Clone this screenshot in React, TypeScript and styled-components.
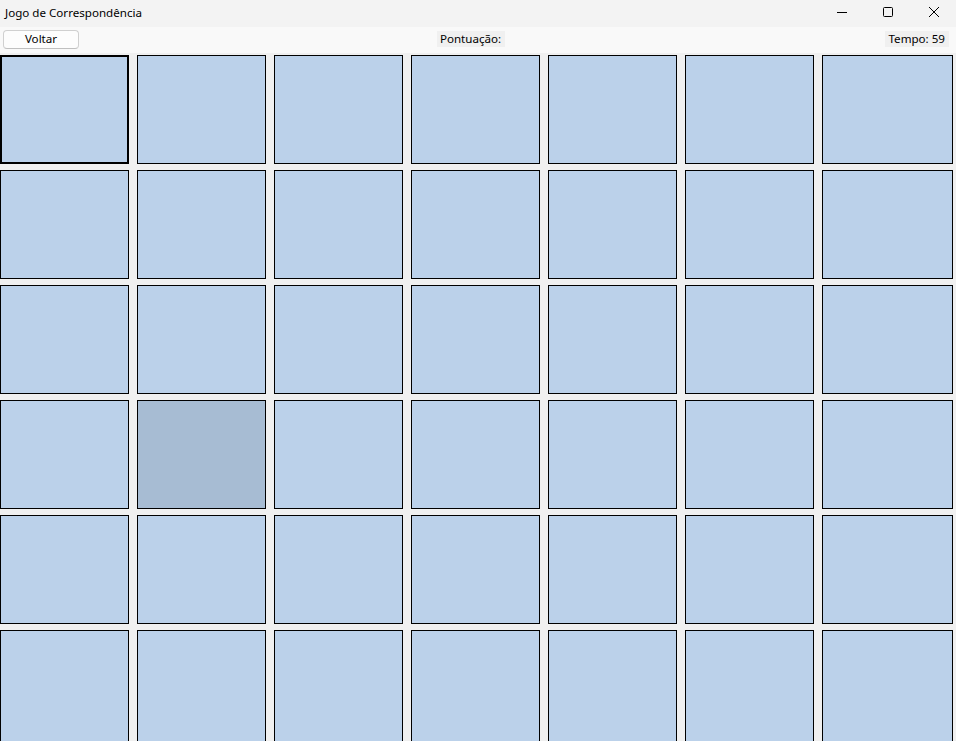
import React from "react";
import styled, { createGlobalStyle } from "styled-components";

const Global = createGlobalStyle`
  html, body { margin: 0; padding: 0; background: #f0f0f0; overflow: hidden; }
  body { font-family: "Noto Sans", "Liberation Sans", sans-serif; }
`;

const Window = styled.div`
  width: 956px;
  height: 741px;
  display: flex;
  flex-direction: column;
  background: #f0f0f0;
  overflow: hidden;
`;

const TitleBar = styled.div`
  height: 27px;
  flex: none;
  display: flex;
  align-items: center;
  background: #f3f3f3;
  padding-left: 5px;
`;

const Title = styled.div`
  flex: 1;
  font-size: 11.6px;
  color: #000;
  margin-top: -2px;
`;

const Controls = styled.div`
  display: flex;
  height: 100%;
  margin-right: -1px;
`;

const CtrlButton = styled.div`
  width: 46px;
  height: 100%;
  display: flex;
  align-items: center;
  justify-content: center;
  padding-bottom: 3px;
  box-sizing: border-box;
`;

const Toolbar = styled.div`
  height: 26px;
  flex: none;
  display: grid;
  grid-template-columns: 1fr auto 1fr;
  align-items: center;
  background: #f9f9f9;
  padding: 0 7px 0 3px;
  box-sizing: border-box;
`;

const Button = styled.button`
  justify-self: start;
  width: 76px;
  height: 19px;
  margin-top: -2px;
  background: #fdfdfd;
  border: 1px solid #d0d0d0;
  border-bottom-color: #c0c0c0;
  border-radius: 4px;
  font-family: inherit;
  font-size: 11.6px;
  color: #000;
  padding: 0;
  line-height: 16px;
`;

const Label = styled.div<{ $align: "center" | "end"; $shift?: number }>`
  justify-self: ${(p) => p.$align};
  background: #f0f0f0;
  font-size: 11.6px;
  line-height: 16px;
  padding: 0 4px 0 3px;
  margin-top: -2px;
  margin-right: ${(p) => p.$shift ?? 0}px;
  color: #000;
`;

const Grid = styled.div`
  flex: 1;
  display: grid;
  grid-template-columns: repeat(6, 129px) 131px;
  grid-template-rows: repeat(5, 109px) 120px;
  column-gap: 8px;
  row-gap: 6px;
  padding-top: 2px;
`;

const Tile = styled.div<{ $focused?: boolean; $hover?: boolean }>`
  box-sizing: border-box;
  background: ${(p) => (p.$hover ? "#a7bcd3" : "#bbd1ea")};
  border: ${(p) => (p.$focused ? "2px" : "1px")} solid #000;
`;

const Minimize = () => (
  <svg width="10" height="10" viewBox="0 0 10 10">
    <path d="M0 5.5h10" stroke="#000" strokeWidth="1" />
  </svg>
);
const Maximize = () => (
  <svg width="10" height="10" viewBox="0 0 10 10">
    <rect x="0.5" y="0.5" width="9" height="9" rx="1" fill="none" stroke="#000" strokeWidth="1" />
  </svg>
);
const Close = () => (
  <svg width="10" height="10" viewBox="0 0 10 10">
    <path d="M0 0L10 10M10 0L0 10" stroke="#000" strokeWidth="1" />
  </svg>
);

export default function App() {
  const tiles = Array.from({ length: 42 }, (_, i) => i);
  return (
    <Window>
      <Global />
      <TitleBar>
        <Title>Jogo de Correspondência</Title>
        <Controls>
          <CtrlButton><Minimize /></CtrlButton>
          <CtrlButton><Maximize /></CtrlButton>
          <CtrlButton><Close /></CtrlButton>
        </Controls>
      </TitleBar>
      <Toolbar>
        <Button>Voltar</Button>
        <Label $align="center" $shift={10}>Pontuação:</Label>
        <Label $align="end">Tempo: 59</Label>
      </Toolbar>
      <Grid>
        {tiles.map((i) => (
          <Tile key={i} $focused={i === 0} $hover={i === 22} />
        ))}
      </Grid>
    </Window>
  );
}
